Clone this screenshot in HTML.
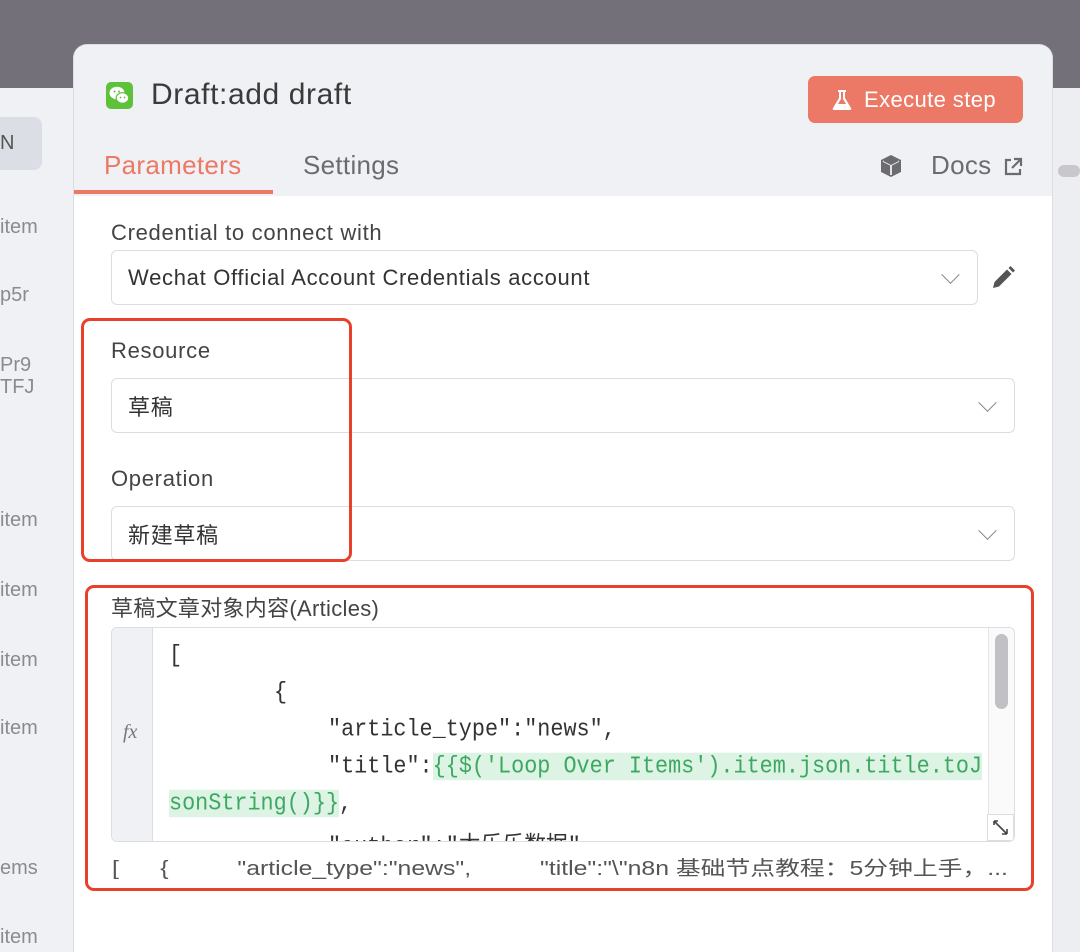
<!DOCTYPE html>
<html style="width:1080px;height:952px;overflow:hidden"><head><meta charset="utf-8"><style>
*{box-sizing:border-box;margin:0;padding:0}
body{width:1080px;height:952px;overflow:hidden;position:relative;background:#f0f1f5;font-family:"Liberation Sans","Noto Sans CJK SC",sans-serif;color:#333}
.top{position:absolute;left:0;top:0;width:1080px;height:88px;background:#737079}
.side{position:absolute;color:#8a8a90;font-size:20px;left:0}
.modal{position:absolute;left:73px;top:44px;width:980px;height:908px;background:#fff;border:1px solid #dcdde3;border-bottom:none;border-radius:14px 14px 0 0;overflow:hidden}
.hdr{position:absolute;left:0;top:0;width:100%;height:151px;background:#f0f1f5}
.abs{position:absolute}
.lbl{position:absolute;font-size:22px;letter-spacing:.7px;color:#444}
.sel{position:absolute;border:1.5px solid #dcdde3;border-radius:6px;background:#fff;font-size:22px;letter-spacing:.7px;color:#333;padding-left:16px;display:flex;align-items:center}
.chev{position:absolute;right:20px;top:50%;width:13px;height:13px;border-right:1.6px solid #888;border-bottom:1.6px solid #888;transform:translateY(-75%) rotate(45deg)}
.red{position:absolute;border:3.5px solid #e8402a;border-radius:9px}
.code{font-family:"Liberation Mono","Noto Sans CJK SC",monospace;font-size:21.8px;color:#333;position:absolute;left:168px;white-space:pre;transform:scaleY(1.1);transform-origin:left}
.g{background:#ddf3e4;color:#3da862}
</style></head><body>
<div class="top"></div>
<div class="abs" style="left:1053px;top:88px;width:27px;height:864px;background:#eceef2"></div>
<div class="abs" style="left:1058px;top:165px;width:22px;height:12px;background:#c8c8cc;border-radius:6px"></div>
<div class="abs" style="left:0;top:117px;width:42px;height:53px;background:#dcdee5;border-radius:0 8px 8px 0"></div>
<div class="side" style="top:132px;color:#555">N</div>
<div class="side" style="top:216px">item</div>
<div class="side" style="top:284px">p5r</div>
<div class="side" style="top:354px;line-height:22px">Pr9<br>TFJ</div>
<div class="side" style="top:509px">item</div>
<div class="side" style="top:579px">item</div>
<div class="side" style="top:649px">item</div>
<div class="side" style="top:717px">item</div>
<div class="side" style="top:857px">ems</div>
<div class="side" style="top:926px">item</div>

<div class="modal">
 <div class="hdr"></div>
 <div class="abs" style="left:32px;top:37px;width:27px;height:27px;background:#5dc13a;border-radius:5px">
  <svg width="27" height="27" viewBox="0 0 27 27"><ellipse cx="11" cy="11" rx="7.5" ry="6.3" fill="#fff"/><ellipse cx="16.5" cy="16" rx="6.3" ry="5.3" fill="#fff" stroke="#5dc13a" stroke-width="1.2"/><circle cx="8.5" cy="9.5" r="1" fill="#5dc13a"/><circle cx="13" cy="9.5" r="1" fill="#5dc13a"/><circle cx="14.5" cy="15.5" r=".9" fill="#5dc13a"/><circle cx="18.5" cy="15.5" r=".9" fill="#5dc13a"/></svg>
 </div>
 <div class="abs" style="left:77px;top:33px;font-size:30px;letter-spacing:.6px;color:#3a3a3a">Draft:add draft</div>
 <div class="abs" style="left:734px;top:31px;width:215px;height:47px;background:#ec7966;border-radius:7px;color:#fff;font-size:22px;letter-spacing:.4px;display:flex;align-items:center;padding-left:24px">
  <svg width="20" height="22" viewBox="0 0 20 22" style="margin-right:12px"><path d="M6 1h8v2h-1v6l6 10c.7 1.3 0 2-1.2 2H2.2C1 21 .3 20.3 1 19l6-10V3H6z" fill="#fff"/><path d="M9 3v7l-3 5h8l-3-5V3z" fill="#ec7966"/></svg>Execute step</div>
 <div class="abs" style="left:30px;top:105px;font-size:26px;letter-spacing:.3px;color:#ec7966">Parameters</div>
 <div class="abs" style="left:0;top:145px;width:199px;height:4px;background:#ec7966"></div>
 <div class="abs" style="left:229px;top:105px;font-size:26px;letter-spacing:.3px;color:#6b6b70">Settings</div>
 <svg class="abs" style="left:805px;top:109px" width="24" height="24" viewBox="0 0 24 24"><path d="M12 1l10 5v12l-10 5-10-5V6z" fill="#6b6b70"/><path d="M4 7l8 4 8-4M12 11v10" stroke="#f0f1f5" stroke-width="1.8" fill="none"/><path d="M4 7l8-4 8 4-8 4z" fill="#6b6b70"/></svg>
 <div class="abs" style="left:857px;top:105px;font-size:26px;letter-spacing:.3px;color:#6b6b70">Docs</div>
 <svg class="abs" style="left:929px;top:112px" width="20" height="20" viewBox="0 0 20 20" fill="none" stroke="#6b6b70" stroke-width="2.2"><path d="M8 3H3v14h14v-5M11 2h7v7M18 2l-9 9"/></svg>

 <div class="lbl" style="left:37px;top:175px">Credential to connect with</div>
 <div class="sel" style="left:37px;top:205px;width:867px;height:55px">Wechat Official Account Credentials account<span class="chev"></span></div>
 <svg class="abs" style="left:915px;top:219px" width="28" height="28" viewBox="0 0 28 28"><path d="M4 24l1.5-6L18 5.5l4.5 4.5L10 22.5z" fill="#555"/><path d="M19.5 4l2-2 4.5 4.5-2 2z" fill="#555"/></svg>

 <div class="lbl" style="left:37px;top:293px">Resource</div>
 <div class="sel" style="left:37px;top:333px;width:904px;height:55px">草稿<span class="chev"></span></div>
 <div class="lbl" style="left:37px;top:421px">Operation</div>
 <div class="sel" style="left:37px;top:461px;width:904px;height:55px">新建草稿<span class="chev"></span></div>

 <div class="lbl" style="left:37px;top:546px;letter-spacing:.3px">草稿文章对象内容(Articles)</div>
 <div class="abs" style="left:37px;top:582px;width:904px;height:215px;border:1.5px solid #dcdde3;border-radius:6px;overflow:hidden;background:#fff">
  <div class="abs" style="left:0;top:0;width:41px;height:100%;background:#f0f1f5;border-right:1.5px solid #dcdde3"></div>
  <div class="abs" style="left:11px;top:93px;font-family:'Liberation Serif',serif;font-style:italic;font-size:20px;color:#777">fx</div>
  <div class="abs" style="right:0;top:0;width:26px;height:100%;border-left:1px solid #e6e6ea;background:#fafafa"></div>
  <div class="abs" style="right:6px;top:6px;width:13px;height:75px;background:#c1c1c5;border-radius:7px"></div>
  <div class="abs" style="right:0;bottom:0;width:27px;height:27px;border:1px solid #dcdde3;background:#fff"><svg width="25" height="25" viewBox="0 0 25 25" fill="none" stroke="#444" stroke-width="1.6"><path d="M6 6v4M6 6h4M6 6l13 13M19 19v-5M19 19h-5"/></svg></div>
 </div>
 <div style="position:absolute;left:0;top:0;width:940px;height:796px;overflow:hidden">
  <div class="code" style="top:598px;left:95px">[</div>
  <div class="code" style="top:635px;left:200px">{</div>
  <div class="code" style="top:672px;left:254px">"article_type":"news",</div>
  <div class="code" style="top:709px;left:254px">"title":<span class="g">{{$('Loop Over Items').item.json.title.toJ</span></div>
  <div class="code" style="top:746px;left:95px"><span class="g">sonString()}}</span>,</div>
  <div class="code" style="top:783px;left:254px">"author":"木乐乐数据"</div>
 </div>
 <div class="abs" style="left:38px;top:807px;font-size:20px;color:#555;white-space:pre;transform:scaleX(1.24);transform-origin:left">[      {          "article_type":"news",          "title":"\"n8n 基础节点教程：5分钟上手，...</div>
</div>
<div class="red" style="left:81px;top:318px;width:271px;height:244px"></div>
<div class="red" style="left:85px;top:585px;width:949px;height:306px"></div>
</body></html>
